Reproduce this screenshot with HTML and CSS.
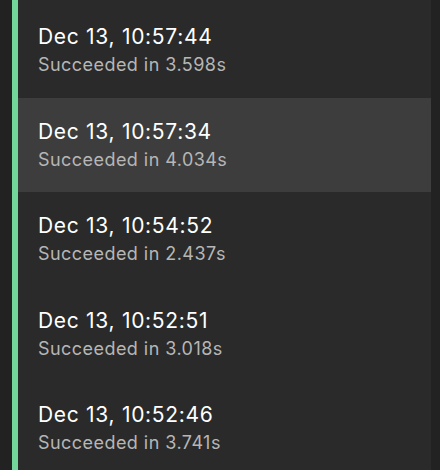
FILE: index.html
```html
<!DOCTYPE html>
<html lang="en">
<head>
    <meta charset="UTF-8">
    <meta name="viewport" content="width=device-width, initial-scale=1.0">
    <title>Runs</title>
    <link rel="stylesheet" href="styles.css">
</head>
<body>
    <div class="panel">
        <div class="accent"></div>
        <ul class="runs">
            <li class="run">
                <div class="run-time">Dec 13, 10:57:44</div>
                <div class="run-status">Succeeded in 3.598s</div>
            </li>
            <li class="run selected">
                <div class="run-time">Dec 13, 10:57:34</div>
                <div class="run-status">Succeeded in 4.034s</div>
            </li>
            <li class="run">
                <div class="run-time">Dec 13, 10:54:52</div>
                <div class="run-status">Succeeded in 2.437s</div>
            </li>
            <li class="run">
                <div class="run-time">Dec 13, 10:52:51</div>
                <div class="run-status">Succeeded in 3.018s</div>
            </li>
            <li class="run">
                <div class="run-time">Dec 13, 10:52:46</div>
                <div class="run-status">Succeeded in 3.741s</div>
            </li>
        </ul>
        <div class="scroll"></div>
    </div>
</body>
</html>
```

FILE: styles.css
```css
* {
    margin: 0;
    padding: 0;
    box-sizing: border-box;
}

body {
    background: #222222;
    font-family: Inter, 'Noto Sans', sans-serif;
    height: 470px;
    overflow: hidden;
}

.panel {
    display: flex;
    height: 100%;
    padding-left: 12px;
}

.accent {
    width: 6px;
    background: #72d69b;
    flex-shrink: 0;
}

.runs {
    list-style: none;
    flex: 1;
    background: #2a2a2a;
    padding-top: 3px;
}

.scroll {
    width: 9px;
    background: #222222;
}

.run {
    height: 94.5px;
    padding: 21px 20px 0;
}

.run.selected {
    background: #3d3d3d;
}

.run-time {
    color: #ffffff;
    font-size: 21px;
    line-height: 26px;
    font-weight: 400;
    letter-spacing: 0.7px;
}

.run-status {
    color: #b6b6b6;
    font-size: 18px;
    line-height: 25px;
    margin-top: 2px;
    letter-spacing: 0.45px;
}
```
